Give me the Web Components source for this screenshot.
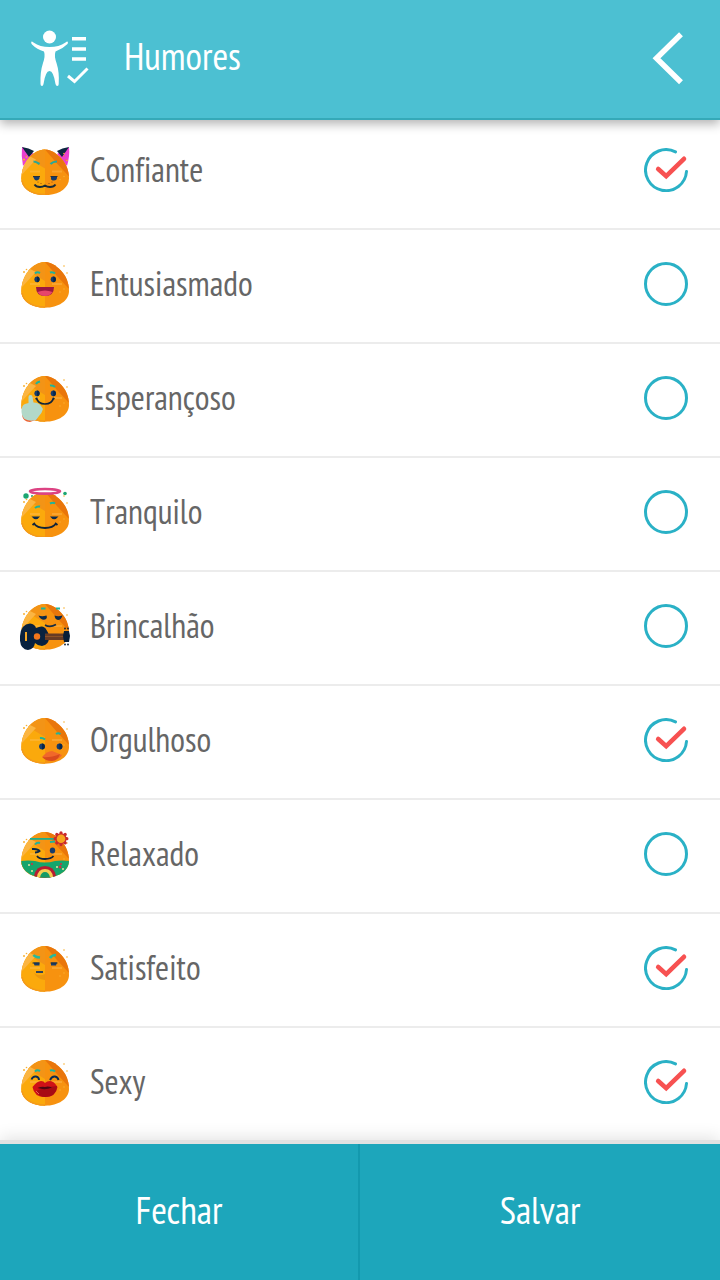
<!DOCTYPE html>
<html lang="pt-BR">
<head>
<meta charset="utf-8">
<meta name="viewport" content="width=device-width, initial-scale=1">
<title>Humores</title>
<style>
    body {
        margin: 0;
        background: #fff;
        color: #666;
        font-family: "PT Sans Narrow", "Liberation Sans Narrow", "Open Sans Condensed", "Liberation Sans", sans-serif;
        font-variant-ligatures: none;
        font-kerning: none;
    }
</style>
</head>
<body>
<mood-screen>
    <mood-header slot="header">Humores</mood-header>
    <mood-row face="confiante" checked>Confiante</mood-row>
    <mood-row face="entusiasmado">Entusiasmado</mood-row>
    <mood-row face="esperancoso">Esperançoso</mood-row>
    <mood-row face="tranquilo">Tranquilo</mood-row>
    <mood-row face="brincalhao">Brincalhão</mood-row>
    <mood-row face="orgulhoso" checked>Orgulhoso</mood-row>
    <mood-row face="relaxado">Relaxado</mood-row>
    <mood-row face="satisfeito" checked>Satisfeito</mood-row>
    <mood-row face="sexy" checked>Sexy</mood-row>
    <mood-footer slot="footer">
        <span slot="close">Fechar</span>
        <span slot="save">Salvar</span>
    </mood-footer>
</mood-screen>

<script>
// orange head shared by all the faces
const head = `
    <path fill="#f7920f" d="M35 12C42 12 48 17 53 23C57 28 59 35 59 41C59 51 48 57.700 35 57.700C22 57.700 11.300 51 11.300 41C11.300 35 13 29 17 23C22 17 28 12 35 12Z"/>
    <path fill="#fba90c" d="M35 12V57.700C22 57.700 11.300 51 11.300 41C11.300 35 13 29 17 23C22 17 28 12 35 12Z"/>
    <path fill="#f39416" d="M35 12V31L25 25L18 21C22 16 28 12 35 12Z"/>
    <path fill="#fbb542" d="M26 22L12 37C12 31 15 24 20 19Z"/>
    <path fill="#e9760b" d="M35 12C42 12 48 17 53 23C57 28 58.500 33 59 39L47 26Z"/>
    <path fill="none" stroke="#f39a1c" stroke-width="1.500" d="M12 43C13.500 52 23 57 35 57"/>
    <path fill="#ffc15a" opacity=".4" d="M20 33h10v2H20zM42 33h10v2H42z"/>
    <g fill="#f9b233"><circle cx="14" cy="22" r="1"/><circle cx="16.500" cy="19.500" r=".8"/><circle cx="54" cy="16" r=".8"/><circle cx="57" cy="23" r=".8"/><circle cx="50" cy="42" r=".7"/><circle cx="54" cy="39" r=".7"/></g>`;

const brows = `<g fill="none" stroke="#1fb39b" stroke-width="2"><path d="M25 23.500Q27 21.500 30 23"/><path d="M40 22.500Q43 21.500 45 23.500"/></g>`;
const eyes = `<g><ellipse cx="27" cy="29.300" rx="2.600" ry="2.900" fill="#173c6c"/><ellipse cx="43.300" cy="29.300" rx="2.600" ry="2.900" fill="#173c6c"/><path fill="#08264a" d="M27 26.400a2.600 2.900 0 0 1 0 5.800zM43.300 26.400a2.600 2.900 0 0 1 0 5.800z"/></g>`;

const faces = {
    confiante: `
        <path fill="#e93fd0" d="M12 11L24 18L13 30Q11 20 12 11ZM59 11L47 18L57 30Q60 20 59 11Z"/>
        <path fill="#0c2540" d="M12 11Q19 12 24 15L19 21ZM59 11Q52 12 47 15L52 21Z"/>
        <g fill="#f9733a"><circle cx="14" cy="24" r=".8"/><circle cx="16" cy="20" r=".7"/><circle cx="56" cy="24" r=".8"/><circle cx="54" cy="20" r=".7"/></g>
        <g transform="translate(0 1.500)">${head}</g>
        <g fill="none" stroke="#2ba795" stroke-width="2.200"><path d="M23.500 25.500Q26 25.500 29.500 28"/><path d="M40.500 28Q43 25.500 47 25.500"/></g>
        <path fill="#173c6c" d="M23.500 40.500h6v2q-1 2-3 2t-3-3zM41 40.500h6v1q0 3-3 3t-3-2z"/>
        <path stroke="#28303a" d="M23 40.500h7M40.500 40.500h7"/>
        <path fill="none" stroke="#172a38" stroke-width="1.800" d="M24.500 48.500Q26 51 30 51Q33 51 35 49.500Q37 51 40 51Q44 51 45.500 48.500"/>
        <g fill="#8a4a18"><circle cx="28" cy="46" r=".6"/><circle cx="31" cy="47.500" r=".6"/><circle cx="39" cy="47.500" r=".6"/><circle cx="42" cy="46" r=".6"/></g>`,
    entusiasmado: `${head}${brows}${eyes}
        <path fill="#9c1840" d="M26 37H44Q44 46 35 46T26 37Z"/>
        <path fill="#e6446b" d="M27.500 42Q35 39 42.500 42Q40 46 35 46T27.500 42Z"/>`,
    esperancoso: `${head}
        <g fill="none" stroke="#1fb39b" stroke-width="2"><path d="M26 20Q27 18 30 17.500"/><path d="M40 21.500Q43 21 45 23"/></g>${eyes}
        <path fill="none" stroke="#10243a" stroke-width="1.700" d="M26.500 34Q28 40 35 40T43.500 34M25.500 35l2-1M42.500 34l2 1"/>
        <path fill="#ef6130" d="M12 51L28 55L20 58Q13 58 12 51Z"/>
        <path fill="#b2d8c8" d="M18.500 39V33Q18.500 31 20.500 31T22.500 33L23.500 38.500Q29 38.500 31 42L33 45Q32 49 29 52L26 56Q20 58 14.500 55Q11 51 11.500 46Q12 41 15 40Z"/>`,
    tranquilo: `
        <g fill="#1ca672"><circle cx="16" cy="18" r="2.700"/><circle cx="55" cy="15.500" r="1.800"/><circle cx="22" cy="18" r="1"/></g>
        <g transform="translate(0 2)">${head}</g>
        <ellipse cx="35" cy="13.300" rx="15" ry="2.300" fill="#fff" stroke="#dc4383" stroke-width="2.600"/>
        <g fill="none" stroke="#1fb39b" stroke-width="2"><path d="M25 30Q27 28 30 28.500"/><path d="M40 25.500Q43 24 45 25.500"/></g>
        <path fill="#0c2b4b" d="M21.500 38.500H30Q26 44 21.500 38.500ZM40 38.500H48.500Q44 44 40 38.500Z"/>
        <path fill="none" stroke="#10243a" stroke-width="1.800" d="M24 45.500Q27 50 35 50T46 45.500M22.500 47l2.500-2M45 45l2.500 2"/>`,
    brincalhao: `${head}
        <path stroke="#1fb39b" stroke-width="2" d="M31 16.500h4.500M46 16.500h4"/>
        <path fill="#0c2b4b" d="M28.500 23.500Q32 25 36.500 23.500Q38 27 34 27.800Q30 27.500 28.500 23.500ZM44.500 23.500Q48 25 52.500 23.500Q51 28 48 28Q45 27.500 44.500 23.500Z"/>
        <path fill="none" stroke="#172d43" stroke-width="1.600" d="M35 33Q40 36 46 32.500"/>
        <path fill="#08223f" d="M20 31.500Q25 32 26 36Q34 32 36.500 38Q39 41 39 45Q39 53 32 54Q28 54 25 51Q24 57 18 58Q9 57 10 44Q11 32 20 31.500Z"/>
        <circle cx="27" cy="44.500" r="3.200" fill="#f0751b"/>
        <rect x="15" y="40" width="2" height="9" fill="#f3a625"/>
        <rect x="35" y="41.500" width="20" height="6.500" fill="#673b24"/>
        <path stroke="#9d5b26" stroke-width=".7" d="M35 44.500h20"/>
        <path fill="#071d37" d="M54 39h5l1 5-1 6h-5l-1-6z"/>
        <g fill="#071d37"><circle cx="55" cy="36.500" r=".9"/><circle cx="58" cy="36.500" r=".9"/><circle cx="55" cy="52.500" r=".9"/><circle cx="58" cy="52.500" r=".9"/></g>`,
    orgulhoso: `${head}
        <g fill="none" stroke="#1fb39b" stroke-width="2"><path d="M30 32Q33 31.500 35 33.500"/><path d="M46 28Q48 26.500 50.500 28"/></g>
        <g fill="#173c6c"><circle cx="32" cy="40.500" r="2.900"/><circle cx="49.500" cy="40.500" r="2.900"/></g>
        <path fill="#08264a" d="M32 37.600a2.900 2.900 0 0 1 0 5.800zM49.500 37.600a2.900 2.900 0 0 1 0 5.800z"/>
        <path fill="#f1682a" d="M32 51Q37 45 42 45L52 49Q50 53 43 54Q35 54 32 51Z"/>
        <path fill="#d94b1e" d="M32.500 51Q40 52 50 48Q48 55 42 55Q35 55 32.500 51Z"/>`,
    relaxado: `${head}
        <path fill="#16a56c" d="M11.300 41Q18 40 25 41Q35 44 45 41Q52 40 59 41C59 51 48 57.700 35 57.700C22 57.700 11.300 51 11.300 41Z"/>
        <path fill="#1fae8c" d="M20 18h24v1.800H20z"/>
        <path fill="none" stroke="#1fb39b" stroke-width="2" d="M25 24.500Q27 22 30 23M40 22l5-.500"/>
        <path fill="none" stroke="#0b2948" stroke-width="2" d="M22 29Q28 28.500 29.500 31Q28 32.500 25 32.500"/>
        <ellipse cx="42.500" cy="30.500" rx="2.700" ry="3" fill="#173c6c"/>
        <path fill="none" stroke="#10243a" stroke-width="1.800" d="M27 36Q29 39 35 39T43.500 36"/>
        <circle cx="51" cy="18.700" r="5.500" fill="#d8322a"/>
        <g stroke="#c92a2c" stroke-width="3.200" stroke-linecap="round"><path d="M51 12.800V24.600M45.100 18.700H56.900M46.800 14.500L55.200 22.900M46.800 22.900L55.200 14.500"/></g>
        <circle cx="51" cy="18.700" r="4.300" fill="#f7a51d"/>
        <path fill="#b81d32" d="M24 56Q26 46 35 46T46 56Q35 59 24 56Z"/>
        <path fill="#f4cf51" d="M27 57Q28 49 35 49T43 57Z"/>
        <path fill="#149b65" d="M30 57.500Q31 52 35 52T40 57.500Z"/>
        <g fill="#e9e4a5"><circle cx="19" cy="45" r="1"/><circle cx="22" cy="51" r="1"/><circle cx="47" cy="47" r="1"/><circle cx="53" cy="49" r="1"/></g>
        <g fill="#d62d42"><circle cx="22" cy="44" r="1"/><circle cx="50" cy="47" r="1.500"/><circle cx="51" cy="44" r="1"/></g>`,
    satisfeito: `${head}
        <path fill="none" stroke="#27b99c" stroke-width="2.700" d="M23.500 21Q25 23 30 23.500M40 24Q42 21 46 21"/>
        <path fill="#173c6c" d="M23.500 28.500h6v3h-5zM41 28.500h6l-1 3h-5z"/>
        <path stroke="#23303b" d="M22.500 29h7M40.500 29h7"/>
        <path fill="#ed970d" d="M24 39Q29 43 35 40V46Q27 45 24 39Z"/>
        <path fill="#31435a" d="M26 37h7v2h-7z"/>`,
    sexy: `${head}${brows}
        <path fill="none" stroke="#0b2b52" stroke-width="1.900" d="M21.500 31.500Q23 28 26 28.500Q29 29 29 32M40 32Q42 28 45 28.500Q48 29 48.500 32"/>
        <path fill="#cf1117" d="M22.500 39Q27 33 31 33Q34 33 35 35Q37 33 40 33Q44 33 47.500 39Q46 49 35 49T22.500 39Z"/>
        <path fill="#a70b14" d="M26 43Q35 39 47 38Q46 49 35 49Q29 49 26 43Z"/>
        <path fill="#4d0711" d="M27.500 40Q32 38 35 39Q38 38 42 39.500Q35 42.500 27.500 40Z"/>
        <path stroke="#eb5e55" d="M26 43l3 3"/>`
};

class MoodScreen extends HTMLElement {
    constructor() {
        super();
        this.attachShadow({ mode: "open" }).innerHTML = `
            <style>
                :host {
                    display: flex;
                    flex-direction: column;
                    min-height: 100vh;
                }
                main {
                    flex: 1;
                    /* the first row slides under the header a little */
                    margin-top: -4px;
                }
                slot[name="header"]::slotted(*) {
                    position: sticky;
                    top: 0;
                    z-index: 1;
                }
                slot[name="footer"]::slotted(*) {
                    position: sticky;
                    bottom: 0;
                    z-index: 1;
                }
            </style>
            <slot name="header"></slot>
            <main><slot></slot></main>
            <slot name="footer"></slot>
        `;
    }
}

class MoodHeader extends HTMLElement {
    constructor() {
        super();
        this.attachShadow({ mode: "open" }).innerHTML = `
            <style>
                :host {
                    display: block;
                    background: #4cc0d2;
                    border-bottom: 2px solid #35a9b8;
                    box-shadow: 0 4px 10px rgba(0, 0, 0, .3);
                    color: #fff;
                }
                header {
                    display: flex;
                    align-items: center;
                    gap: 34px;
                    height: 118px;
                    padding: 0 22px 0 30px;
                    box-sizing: border-box;
                }
                h1 {
                    flex: 1;
                    margin: 0;
                    padding-bottom: 6px;
                    font-size: 38px;
                    line-height: 48px;
                    font-weight: 400;
                }
                button {
                    padding: 0;
                    border: 0;
                    background: none;
                    cursor: pointer;
                }
                svg {
                    display: block;
                }
            </style>
            <header>
                <svg width="60" height="60" viewBox="30 29 60 60" fill="#fff" aria-hidden="true">
                    <circle cx="49.500" cy="37" r="6.500"/>
                    <path d="M31.500 41.500Q30.500 43 32 44.500Q37 49.500 44 51.500Q45.500 56 43 63Q40 72 40.500 84Q40.500 86 42 86Q43.200 86 43.500 84Q45.500 71 49.500 71T55.500 84Q56 86 57.300 86Q58.700 86 58.700 84Q59.500 72 56.500 63Q54 56 55.500 51.500Q62.500 49 67.500 44Q68.500 42.500 67.500 41.500Q66.500 41.500 65.500 42.500Q59 47 49.500 47T33.500 42.500Q32.500 41.500 31.500 41.500Z"/>
                    <path d="M72 37h14v3.500H72zM72 47.200h14v3.500H72zM72 57.300h14v3.500H72z"/>
                    <path fill="none" stroke="#fff" stroke-width="3" d="M68 76L74.500 81.500L87.500 68.500"/>
                </svg>
                <h1><slot></slot></h1>
                <button type="button" aria-label="Voltar">
                    <svg width="48" height="60" viewBox="650 29 48 60">
                        <path fill="none" stroke="#fff" stroke-width="5.500" d="M681 34.300L656.500 58.300L681 82.300"/>
                    </svg>
                </button>
            </header>
        `;
    }
}

class MoodRow extends HTMLElement {
    constructor() {
        super();
        this.attachShadow({ mode: "open" }).innerHTML = `
            <style>
                :host {
                    display: block;
                    border-bottom: 2px solid #ececec;
                }
                :host(:last-of-type) {
                    border-bottom: 0;
                }
                label {
                    display: flex;
                    align-items: center;
                    gap: 20px;
                    height: 112px;
                    padding: 0 32px 4px 20px;
                    box-sizing: border-box;
                    font-size: 34px;
                    line-height: 40px;
                    cursor: pointer;
                }
                .name {
                    flex: 1;
                    padding-bottom: 2px;
                }
                .tick {
                    display: grid;
                }
                .tick > * {
                    grid-area: 1 / 1;
                }
                input {
                    appearance: none;
                    width: 44px;
                    height: 44px;
                    margin: 0;
                    border: 3px solid #2ab1c6;
                    border-radius: 50%;
                    box-sizing: border-box;
                }
                .tick svg {
                    visibility: hidden;
                    pointer-events: none;
                }
                input:checked {
                    border-color: transparent;
                }
                input:checked + svg {
                    visibility: visible;
                }
            </style>
            <label>
                <svg class="face" width="50" height="50" viewBox="10 9 50 50" aria-hidden="true">${faces[this.getAttribute("face")]}</svg>
                <span class="name"><slot></slot></span>
                <span class="tick">
                    <input type="checkbox">
                    <svg width="44" height="44" viewBox="0 0 44 44" fill="none" stroke-linecap="round">
                        <path stroke="#2ab1c6" stroke-width="3" d="M31.500 3.900A20.500 20.500 0 1 0 42.500 23.500"/>
                        <path stroke="#f75151" stroke-width="4.600" stroke-linejoin="miter" d="M14.200 21L22.200 28.200L40 10.800"/>
                    </svg>
                </span>
            </label>
        `;
        this.shadowRoot.querySelector("input").checked = this.hasAttribute("checked");
    }
}

class MoodFooter extends HTMLElement {
    constructor() {
        super();
        this.attachShadow({ mode: "open" }).innerHTML = `
            <style>
                :host {
                    display: block;
                    border-top: 4px solid #e1e1e1;
                    box-shadow: 0 -2px 16px rgba(0, 0, 0, .12);
                }
                footer {
                    display: grid;
                    grid-template-columns: 1fr 1fr;
                    height: 136px;
                }
                button {
                    padding: 0 0 4px;
                    border: 0;
                    background: #1da6bb;
                    color: #fff;
                    font-family: inherit;
                    font-size: 38px;
                    line-height: 48px;
                    cursor: pointer;
                }
                button:first-child {
                    border-right: 2px solid #1399ae;
                }
            </style>
            <footer>
                <button type="button"><slot name="close"></slot></button>
                <button type="button"><slot name="save"></slot></button>
            </footer>
        `;
    }
}

window.customElements.define("mood-screen", MoodScreen);
window.customElements.define("mood-header", MoodHeader);
window.customElements.define("mood-row", MoodRow);
window.customElements.define("mood-footer", MoodFooter);
</script>
</body>
</html>
